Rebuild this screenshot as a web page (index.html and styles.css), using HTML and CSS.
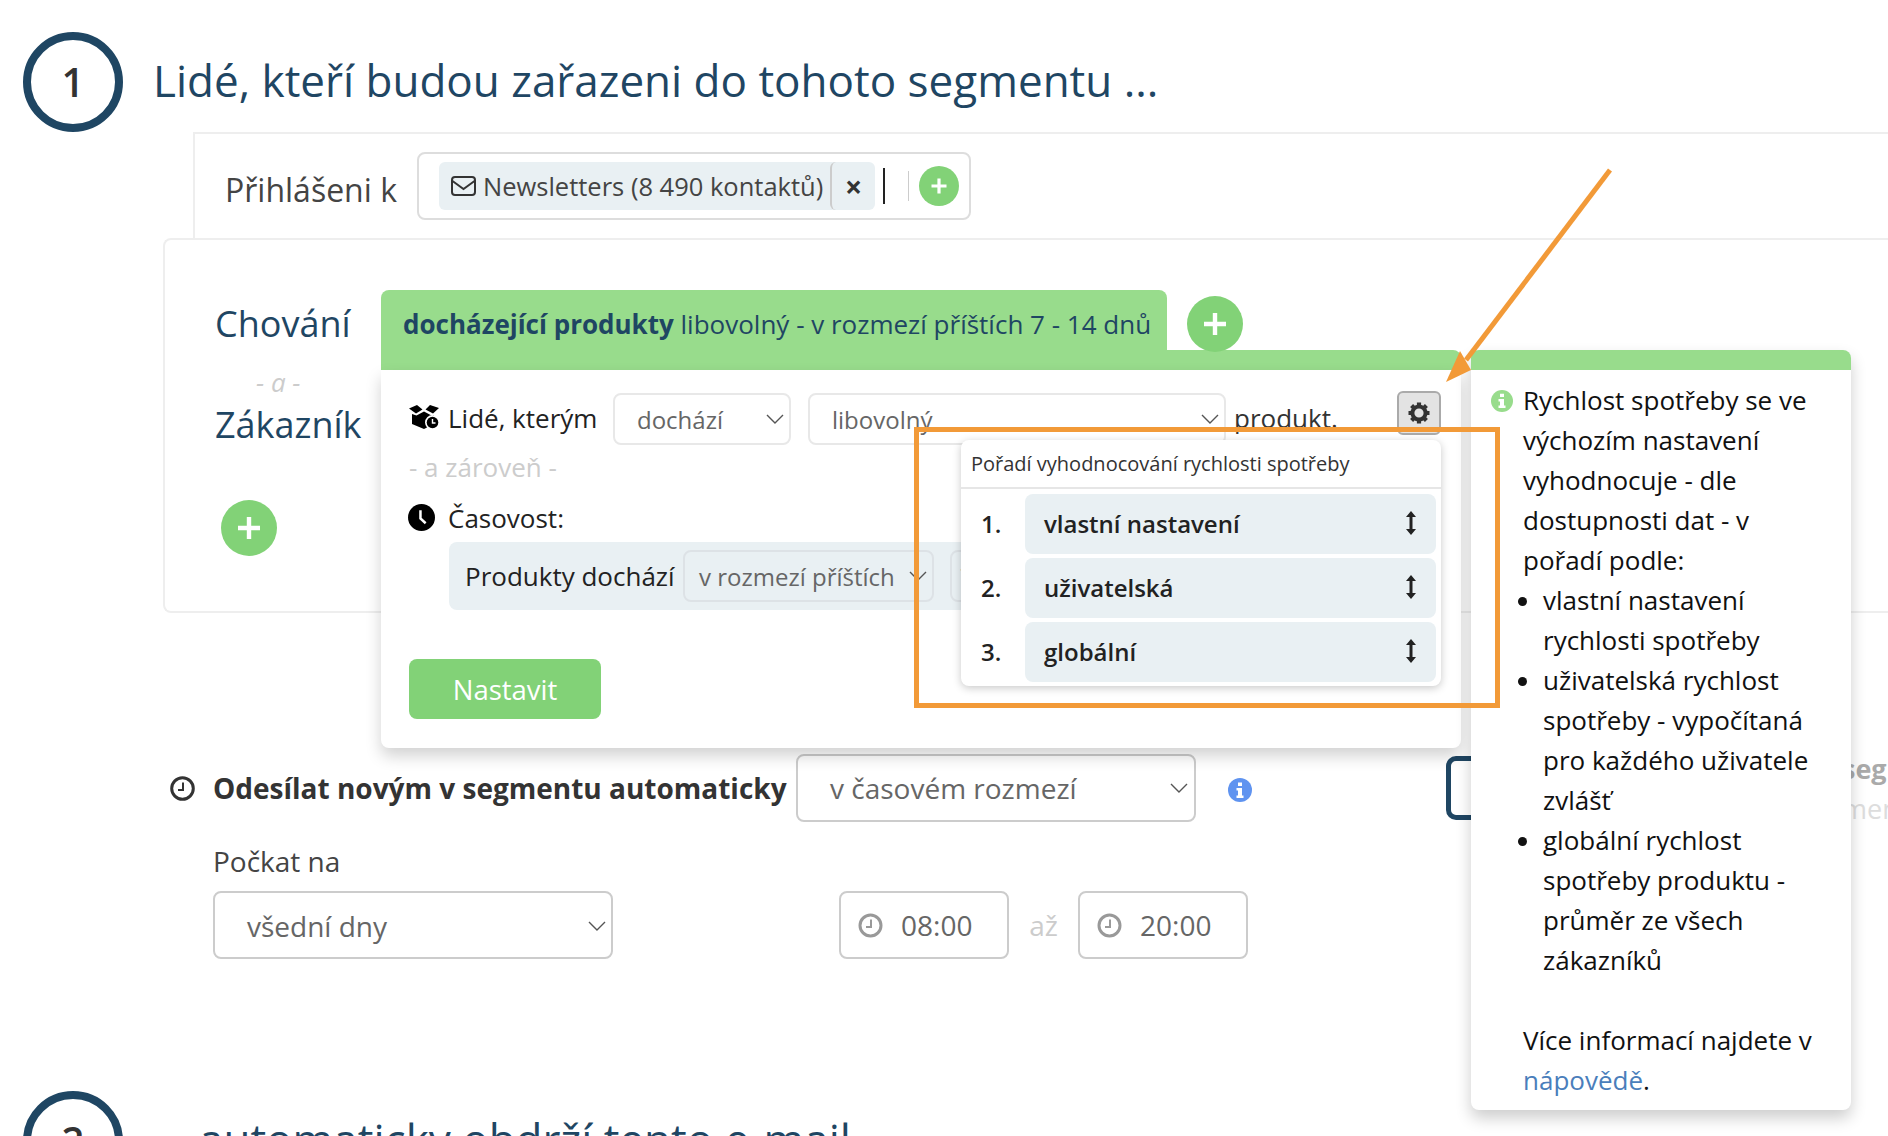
FILE: index.html
```html
<!DOCTYPE html>
<html lang="cs">
<head>
<meta charset="utf-8">
<title>Segment</title>
<link rel="stylesheet" href="styles.css">
</head>
<body>
<div class="page">
  <header class="step">
    <div class="step-num">1</div>
    <h1 class="step-title">Lidé, kteří budou zařazeni do tohoto segmentu ...</h1>
  </header>

  <section class="list-box">
    <span class="list-label">Přihlášeni k</span>
    <div class="tag-input">
      <div class="chip">
        <svg class="ico-env" viewBox="0 0 25 20"><rect x="1" y="1" width="23" height="18" rx="3" fill="none" stroke="#333" stroke-width="2"/><path d="M1.5 5 L12.5 13 L23.5 5" fill="none" stroke="#333" stroke-width="2"/></svg>
        <span class="chip-text">Newsletters (8 490 kontaktů)</span>
        <span class="chip-x">×</span>
      </div>
      <span class="cursor"></span>
      <span class="sep"></span>
      <span class="plus plus-s"><svg viewBox="0 0 40 40"><path d="M20 12.5V27.5M12.5 20H27.5" stroke="#fff" stroke-width="3.2" fill="none"/></svg></span>
    </div>
  </section>

  <section class="rules-box">
    <div class="rules-side">
      <div class="side-title">Chování</div>
      <div class="side-and">- a -</div>
      <div class="side-title">Zákazník</div>
      <span class="plus plus-l side-plus"><svg viewBox="0 0 56 56"><path d="M28 17V39M17 28H39" stroke="#fff" stroke-width="4.4" fill="none"/></svg></span>
    </div>

    <div class="panel">
      <div class="panel-tabs">
        <div class="tab"><b>docházející produkty</b> libovolný - v rozmezí příštích 7 - 14 dnů</div>
        <span class="plus plus-l tab-plus"><svg viewBox="0 0 56 56"><path d="M28 17V39M17 28H39" stroke="#fff" stroke-width="4.4" fill="none"/></svg></span>
      </div>
      <div class="strip"></div>
      <div class="panel-body">
        <div class="cond-row">
          <svg class="ico-box" viewBox="0 0 30 24"><path d="M0 3.500L8 0L13.500 4.500L7 8.500ZM21 0L30 3L24 8.500L16.500 4.500ZM3 9L7.500 10.500L15 6.500L22.500 10.500L25 10V19L15 24L3 19Z" fill="#000"/><circle cx="23.500" cy="17.500" r="7.500" fill="#fff"/><circle cx="23.500" cy="17.500" r="5.800" fill="#000"/><path d="M23.500 14V18H26.500" fill="none" stroke="#fff" stroke-width="1.400"/></svg>
          <span class="cond-label">Lidé, kterým</span>
          <div class="sel sel-a"><span>dochází</span><svg class="chev" viewBox="0 0 18 10"><path d="M1 1L9 9L17 1" fill="none" stroke="#555" stroke-width="1.400"/></svg></div>
          <div class="sel sel-b"><span>libovolný</span><svg class="chev" viewBox="0 0 18 10"><path d="M1 1L9 9L17 1" fill="none" stroke="#555" stroke-width="1.400"/></svg></div>
          <span class="cond-word">produkt.</span>
          <button class="gear" type="button"><svg viewBox="0 0 24 24"><circle cx="12" cy="12" r="6.600" fill="none" stroke="#333" stroke-width="4"/><g stroke="#333" stroke-width="4.200"><path d="M12 1.500V6M12 18V22.500M1.500 12H6M18 12H22.500M4.600 4.600L7.700 7.700M16.300 16.300L19.400 19.400M19.400 4.600L16.300 7.700M7.700 16.300L4.600 19.400"/></g></svg></button>
        </div>
        <div class="and-note">- a zároveň -</div>
        <div class="time-head">
          <svg class="ico-clock" viewBox="0 0 26 26"><circle cx="13" cy="13" r="13" fill="#000"/><path d="M12 6V14L17 18.500" fill="none" stroke="#fff" stroke-width="2.400"/></svg>
          <span class="cond-label">Časovost:</span>
        </div>
        <div class="time-band">
          <span class="band-label">Produkty dochází</span>
          <div class="sel sel-c"><span>v rozmezí příštích</span><svg class="chev" viewBox="0 0 18 10"><path d="M1 1L9 9L17 1" fill="none" stroke="#555" stroke-width="1.400"/></svg></div>
          <div class="sel sel-d"><span>7</span></div>
        </div>
        <button class="btn-set" type="button">Nastavit</button>

        <div class="pop">
          <div class="pop-head">Pořadí vyhodnocování rychlosti spotřeby</div>
          <div class="pop-list">
            <div class="pop-row"><span class="pop-num">1.</span><div class="pop-item"><span>vlastní nastavení</span><svg class="ico-sort" viewBox="0 0 12 26"><path d="M6 4V22" stroke="#222" stroke-width="3"/><path d="M1 7L6 1L11 7ZM1 19L6 25L11 19Z" fill="#222"/></svg></div></div>
            <div class="pop-row"><span class="pop-num">2.</span><div class="pop-item"><span>uživatelská</span><svg class="ico-sort" viewBox="0 0 12 26"><path d="M6 4V22" stroke="#222" stroke-width="3"/><path d="M1 7L6 1L11 7ZM1 19L6 25L11 19Z" fill="#222"/></svg></div></div>
            <div class="pop-row"><span class="pop-num">3.</span><div class="pop-item"><span>globální</span><svg class="ico-sort" viewBox="0 0 12 26"><path d="M6 4V22" stroke="#222" stroke-width="3"/><path d="M1 7L6 1L11 7ZM1 19L6 25L11 19Z" fill="#222"/></svg></div></div>
          </div>
        </div>
      </div>
    </div>
  </section>

  <section class="send-row">
    <svg class="ico-clock-o" viewBox="0 0 25 25"><circle cx="12.500" cy="12.500" r="10.800" fill="none" stroke="#333" stroke-width="3"/><path d="M13 6.500V14H8" fill="none" stroke="#333" stroke-width="2"/></svg>
    <b class="send-label">Odesílat novým v segmentu automaticky</b>
    <div class="sel sel-e"><span>v časovém rozmezí</span><svg class="chev" viewBox="0 0 18 10"><path d="M1 1L9 9L17 1" fill="none" stroke="#555" stroke-width="1.400"/></svg></div>
    <svg class="ico-info" viewBox="0 0 24 24"><circle cx="12" cy="12" r="12" fill="#5f93f0"/><path d="M10 4.500H14V8H10ZM8.500 10H14V17.500H15.500V20H8.500V17.500H10V12.500H8.500Z" fill="#fff"/></svg>
    <div class="send-card"></div>
    <div class="send-side"><b>segmentu</b><span>menu</span></div>
  </section>

  <div class="wait-label">Počkat na</div>
  <section class="wait-row">
    <div class="sel sel-f"><span>všední dny</span><svg class="chev" viewBox="0 0 18 10"><path d="M1 1L9 9L17 1" fill="none" stroke="#555" stroke-width="1.400"/></svg></div>
    <div class="time-input"><svg class="ico-clock-g" viewBox="0 0 25 25"><circle cx="12.500" cy="12.500" r="10.500" fill="none" stroke="#999" stroke-width="3"/><path d="M13 6.500V14H8" fill="none" stroke="#999" stroke-width="2"/></svg><span>08:00</span></div>
    <span class="to-word">až</span>
    <div class="time-input"><svg class="ico-clock-g" viewBox="0 0 25 25"><circle cx="12.500" cy="12.500" r="10.500" fill="none" stroke="#999" stroke-width="3"/><path d="M13 6.500V14H8" fill="none" stroke="#999" stroke-width="2"/></svg><span>20:00</span></div>
  </section>

  <header class="step step-two">
    <div class="step-num">2</div>
    <h2 class="step-title">automaticky obdrží tento e-mail</h2>
  </header>

  <aside class="help">
    <div class="help-strip"></div>
    <div class="help-body">
      <svg class="ico-help" viewBox="0 0 22 22"><circle cx="11" cy="11" r="11" fill="#98dc8c"/><path d="M9 3.800H13V7H9ZM7.500 9H13V15.500H14.500V18H7.500V15.500H9V11.500H7.500Z" fill="#fff"/></svg>
      <p class="help-p">Rychlost spotřeby se ve výchozím nastavení vyhodnocuje - dle dostupnosti dat - v pořadí podle:</p>
      <ul class="help-list">
        <li>vlastní nastavení rychlosti spotřeby</li>
        <li>uživatelská rychlost spotřeby - vypočítaná pro každého uživatele zvlášť</li>
        <li>globální rychlost spotřeby produktu - průměr ze všech zákazníků</li>
      </ul>
      <p class="help-p help-more">Více informací najdete v <a class="help-link" href="#">nápovědě</a>.</p>
    </div>
  </aside>

  <div class="callout-rect"></div>
  <svg class="callout-arrow" viewBox="0 0 200 240"><path d="M184 2L40 192" fill="none" stroke="#f29a38" stroke-width="5"/><path d="M20 214L45 202L34 183Z" fill="#f29a38"/></svg>
</div>
</body>
</html>
```
FILE: styles.css
```css
* { box-sizing: border-box; }
html, body { margin: 0; padding: 0; background: #fff; }
body { width: 1888px; height: 1136px; overflow: hidden; font-family: "Open Sans", sans-serif; font-size: 26px; color: #333; }
.page { position: relative; width: 1888px; height: 1136px; overflow: hidden; }

.step { display: flex; align-items: center; height: 100px; margin: 32px 0 0 23px; }
.step-num { flex: none; width: 100px; height: 100px; border: 8px solid #1f4663; border-radius: 50%; display: flex; align-items: center; justify-content: center; font-size: 40px; font-weight: 600; color: #333; padding-bottom: 1px; }
.step-title { margin: 0 0 0 30px; font-size: 44px; font-weight: 400; color: #1f4663; white-space: nowrap; line-height: 1; position: relative; top: -2px; }
.step-two { margin-top: 132px; }
.step-two .step-title { margin-left: 76px; }

.list-box { display: flex; align-items: flex-start; height: 106px; margin-left: 193px; border-left: 2px solid #eee; border-top: 2px solid #eee; padding: 18px 0 0 30px; }
.list-label { font-size: 32px; color: #444; line-height: 76px; width: 192px; white-space: nowrap; }
.tag-input { display: flex; align-items: center; width: 554px; height: 68px; border: 2px solid #ddd; border-radius: 8px; padding-left: 20px; }
.chip { display: flex; align-items: center; width: 436px; height: 48px; background: #e9f0f3; border-radius: 6px; padding-left: 12px; }
.ico-env { width: 25px; height: 20px; flex: none; }
.chip-text { margin-left: 7px; width: 347px; font-size: 25.500px; color: #444; white-space: nowrap; }
.chip-x { display: flex; align-items: center; justify-content: center; width: 45px; height: 48px; border-left: 2px solid #ccc; border-radius: 6px; font-weight: 700; font-size: 30px; color: #333; }
.cursor { width: 2px; height: 36px; background: #222; margin-left: 8px; }
.sep { width: 1px; height: 30px; background: #ccc; margin-left: 23px; }
.plus { display: block; flex: none; border-radius: 50%; background: #82d277; }
.plus svg { display: block; width: 100%; height: 100%; }
.plus-s { width: 40px; height: 40px; margin-left: 10px; }
.plus-l { width: 56px; height: 56px; }

.rules-box { position: relative; height: 375px; margin-left: 163px; border: 2px solid #eee; border-right: 0; border-radius: 8px 0 0 8px; padding: 59px 0 0 50px; }
.side-title { font-size: 36px; line-height: 50px; color: #1f4663; }
.side-and { font-size: 26px; font-style: italic; color: #ccc; line-height: 36px; margin: 15px 0 0 41px; }
.side-plus { margin: 50px 0 0 6px; }

.panel { position: absolute; left: 216px; top: 50px; width: 1080px; z-index: 3; }
.panel-tabs { display: flex; align-items: flex-start; height: 60px; }
.tab { width: 786px; height: 60px; background: #98dc8c; border-radius: 8px 8px 0 0; padding: 0 0 0 22px; line-height: 68px; font-size: 26px; color: #1f4663; white-space: nowrap; }
.tab b { font-weight: 700; }
.tab-plus { margin: 6px 0 0 20px; }
.strip { height: 20px; background: #98dc8c; border-radius: 0 8px 0 0; }
.panel-body { position: relative; height: 378px; background: #fff; border-radius: 0 0 8px 8px; box-shadow: 0 8px 16px rgba(0,0,0,.18); padding: 21px 20px 0 28px; }

.cond-row { display: flex; align-items: flex-start; height: 54px; }
.ico-box { flex: none; width: 30px; height: 24px; margin-top: 14px; }
.cond-label { font-size: 26px; color: #222; line-height: 54px; }
.cond-row .cond-label { margin-left: 9px; width: 165px; }
.sel { display: flex; align-items: center; justify-content: space-between; flex: none; background: #fff; color: #666; white-space: nowrap; border: 2px solid #e8e8e8; border-radius: 8px; }
.chev { flex: none; width: 18px; height: 10px; }
.sel-a { width: 178px; height: 52px; margin-top: 2px; padding: 0 5px 0 22px; font-size: 24px; }
.sel-b { width: 418px; height: 52px; margin: 2px 0 0 17px; padding: 0 5px 0 22px; font-size: 24px; }
.cond-word { margin: 0 0 0 8px; width: 163px; font-size: 26px; color: #333; line-height: 54px; }
.gear { flex: none; width: 44px; height: 44px; padding: 0; background: #e3e3e3; border: 2px solid #aaa; border-radius: 6px; display: flex; align-items: center; justify-content: center; }
.gear svg { width: 24px; height: 24px; }

.and-note { margin-top: 4px; font-size: 26px; color: #ccc; line-height: 36px; }
.time-head { display: flex; align-items: center; margin-top: 8px; height: 49px; }
.ico-clock { flex: none; width: 27px; height: 27px; margin-left: -1px; }
.time-head .cond-label { margin-left: 13px; }
.time-band { display: flex; align-items: center; width: 800px; height: 68px; margin: 0 0 0 40px; background: #e9f0f3; border-radius: 8px; padding-left: 16px; overflow: hidden; }
.band-label { font-size: 26px; color: #222; width: 218px; white-space: nowrap; }
.sel-c { width: 251px; height: 52px; padding: 0 5px 0 14px; font-size: 24px; background: #e9f0f3; border-color: #dde2e6; }
.sel-d { width: 100px; height: 52px; margin-left: 16px; padding-left: 8px; font-size: 24px; background: #e9f0f3; border-color: #dde2e6; }
.btn-set { display: block; width: 192px; height: 60px; margin-top: 49px; border: 0; border-radius: 8px; background: #82d277; color: #fff; font-family: inherit; font-size: 27.500px; }

.pop { position: absolute; left: 580px; top: 70px; width: 480px; height: 246px; background: #fff; border-radius: 8px; box-shadow: 0 2px 8px rgba(0,0,0,.22); }
.pop-head { height: 49px; padding-left: 10px; border-bottom: 2px solid #e6e6e6; font-size: 20px; line-height: 47px; color: #333; white-space: nowrap; }
.pop-list { display: flex; flex-direction: column; gap: 4px; padding: 5px 5px 0 0; }
.pop-row { display: flex; align-items: center; height: 60px; }
.pop-num { flex: none; width: 64px; padding: 0 0 2px 20px; font-size: 24px; font-weight: 600; color: #222; }
.pop-item { display: flex; align-items: center; justify-content: space-between; flex: 1; height: 60px; background: #e9f0f3; border-radius: 8px; padding: 0 19px 2px 19px; font-size: 24px; font-weight: 600; color: #222; }
.ico-sort { width: 12px; height: 26px; }

.send-row { display: flex; align-items: center; flex-wrap: nowrap; width: 2200px; height: 68px; margin: 141px 0 0 170px; }
.ico-clock-o { flex: none; width: 25px; height: 25px; }
.send-label { flex: none; margin-left: 18px; font-size: 28px; font-weight: 700; color: #333; white-space: nowrap; width: 583px; }
.sel-e { width: 400px; height: 68px; border-color: #ccc; padding: 0 6px 0 32px; font-size: 28px; color: #666; }
.ico-info { flex: none; width: 24px; height: 24px; margin: 4px 0 0 32px; }
.send-card { flex: none; width: 300px; height: 64px; margin-left: 194px; border: 5px solid #1f4663; border-radius: 10px; }
.send-side { display: flex; flex-direction: column; flex: none; margin-left: 96px; padding-top: 2px; font-size: 27px; line-height: 40px; white-space: nowrap; }
.send-side b { color: #aaa; font-weight: 700; }
.send-side span { color: #ddd; }

.wait-label { margin: 18px 0 0 213px; height: 51px; font-size: 28px; line-height: 42px; color: #444; }
.wait-row { display: flex; align-items: center; height: 68px; margin-left: 213px; }
.sel-f { width: 400px; height: 68px; border-color: #ccc; padding: 2px 5px 0 32px; font-size: 28px; }
.time-input { display: flex; align-items: center; flex: none; width: 170px; height: 68px; border: 2px solid #ccc; border-radius: 8px; padding-left: 17px; font-size: 28px; color: #666; }
.wait-row .sel-f + .time-input { margin-left: 226px; }
.ico-clock-g { flex: none; width: 25px; height: 25px; margin-right: 18px; }
.to-word { width: 69px; text-align: center; font-size: 28px; color: #ccc; }

.help { position: absolute; left: 1471px; top: 350px; width: 380px; height: 760px; background: #fff; border-radius: 8px; box-shadow: 0 8px 16px rgba(0,0,0,.2); z-index: 4; }
.help-strip { height: 20px; background: #98dc8c; border-radius: 8px 8px 0 0; }
.help-body { position: relative; padding: 10px 26px 0 52px; font-size: 26px; line-height: 40px; color: #111; }
.ico-help { position: absolute; left: 20px; top: 20px; width: 22px; height: 22px; }
.help-p { margin: 0; }
.help-list { margin: 0; padding: 0 0 0 20px; }
.help-more { margin-top: 40px; }
.help-link { color: #4a7ebb; text-decoration: none; }

.callout-rect { position: absolute; left: 914px; top: 427px; width: 586px; height: 281px; border: 5px solid #f29a38; z-index: 6; pointer-events: none; }
.callout-arrow { position: absolute; left: 1426px; top: 168px; width: 200px; height: 240px; z-index: 6; }
```
